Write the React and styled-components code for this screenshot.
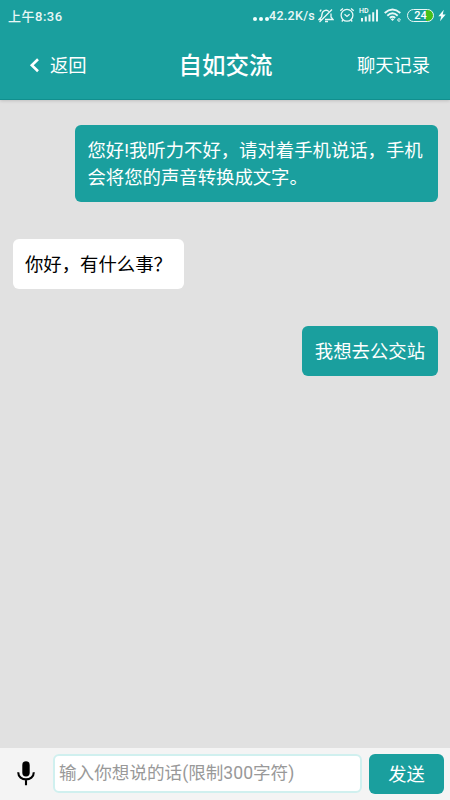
import React, { useState } from 'react'
import styled, { createGlobalStyle } from 'styled-components'

const messages = [
  { id: 1, mine: true, text: '您好!我听力不好，请对着手机说话，手机会将您的声音转换成文字。' },
  { id: 2, mine: false, text: '你好，有什么事？' },
  { id: 3, mine: true, text: '我想去公交站' },
]

const StatusIcons = () => {
  return (
    <StatusGroup>
      <Dots>
        <i />
        <i />
        <i />
      </Dots>
      <Speed>42.2K/s</Speed>
      {/* muted bell */}
      <svg width="16" height="15" viewBox="0 0 16 15" fill="none" stroke="#e9f7f6" strokeWidth="1.3">
        <path d="M3.500 9 1 11.500h2.500M11 3.600C8.500 1 4 2.500 4 6.500L3.500 9M13 5.500V9l2 2.500H7" />
        <path d="M7 13.500h3M1.500 14 14 1.500M1.800 3.500l1.500-1.800" />
      </svg>
      {/* alarm */}
      <svg className="alarm" width="16" height="16" viewBox="0 0 16 16" fill="none" stroke="#e9f7f6" strokeWidth="1.300">
        <circle cx="8" cy="8.300" r="5.900" />
        <path d="M5.500 7.300 8 9.400l2.600-2.100M1.300 3.700 4 1.500M14.700 3.700 12 1.500M4 13l-1.200 1.500M12 13l1.200 1.500" />
      </svg>
      <Signal>
        <span>HD</span>
        <svg width="18" height="13" viewBox="0 0 18 13" fill="#e9f7f6">
          <path d="M1 9h2v3.500H1zM4.800 7.500h2v5h-2zM8.500 5.500h2v7h-2zM12.200 3.200h2v9.300h-2zM16 .5h2v12h-2z" />
        </svg>
      </Signal>
      {/* wifi */}
      <svg className="wifi" width="19" height="16" viewBox="0 0 19 16" fill="none" stroke="#e9f7f6" strokeWidth="1.900">
        <path d="M.7 6Q8.500-.9 16.300 6M3.300 8.700Q8.500 4 13.700 8.700M5.800 11Q8.500 8.700 11.200 11" />
        <path d="M6.700 12.200 8.500 11.300 10.300 12.200 8.500 14Z" fill="#e9f7f6" stroke="none" />
        <path d="M13.700 13h2.600c0-2-2.600-2-2.600 0 0 1.600 1.700 1.700 2.500.9" strokeWidth=".8" />
      </svg>
      <Battery>24</Battery>
      <svg className="bolt" width="8" height="13" viewBox="0 0 8 13" fill="#f4fffe">
        <path d="M5.800.8.400 7.300h2.800L2 12.300l5.700-6.800H4.700Z" />
      </svg>
    </StatusGroup>
  )
}

const App = () => {
  const [text, setText] = useState('')

  return (
    <Page>
      <GlobalStyle />
      <Header>
        <StatusBar>
          <Clock>上午8:36</Clock>
          <StatusIcons />
        </StatusBar>
        <NavBar>
          <NavButton type="button">
            <svg width="11" height="16" viewBox="0 0 11 16" fill="none" stroke="#fff" strokeWidth="2.6">
              <path d="M10 1.200 3.800 7.200l6.200 6" />
            </svg>
            返回
          </NavButton>
          <Title>自如交流</Title>
          <NavButton type="button" $end>
            聊天记录
          </NavButton>
        </NavBar>
      </Header>

      {/* Messages */}
      <Messages>
        {messages.map((m) => {
          return (
            <Bubble key={m.id} $mine={m.mine}>
              {m.text}
            </Bubble>
          )
        })}
      </Messages>

      {/* Input bar */}
      <Composer onSubmit={(e) => e.preventDefault()}>
        <MicButton type="button" aria-label="mic">
          <svg width="18" height="25" viewBox="0 0 18 25">
            <rect x="5.300" y="0.300" width="7.400" height="15.200" rx="3.700" fill="#000" />
            <path d="M1.200 11.300c0 9.400 15.600 9.400 15.600 0M9 18.500v5.700" fill="none" stroke="#000" strokeWidth="2.1" />
          </svg>
        </MicButton>
        <TextInput
          placeholder="输入你想说的话(限制300字符)"
          value={text}
          onChange={(e) => setText(e.target.value)}
        />
        <SendButton type="submit">发送</SendButton>
      </Composer>
    </Page>
  )
}

const GlobalStyle = createGlobalStyle`
  * {
    box-sizing: border-box;
  }
  body {
    margin: 0;
    font-family: Roboto, 'Noto Sans CJK SC', sans-serif;
  }
  button,
  input {
    font-family: inherit;
  }
`

const Page = styled.div`
  display: flex;
  flex-direction: column;
  height: 100vh;
  background: #e1e1e1;
`

const Header = styled.header`
  position: relative;
  height: 100px;
  background: #1a9f9e;
  border-bottom: 1px solid #118f8e;
  box-shadow: 0 1px 3px rgba(0, 0, 0, 0.15);
  color: #fff;
`

const StatusBar = styled.div`
  display: flex;
  justify-content: space-between;
  align-items: center;
  height: 30px;
  padding: 0 4px 0 8px;
`

const Clock = styled.span`
  font-size: 13px;
  font-weight: 500;
  letter-spacing: 0.5px;
  color: #e9f7f6;
`

const StatusGroup = styled.div`
  display: flex;
  align-items: center;
  .alarm {
    margin-left: 5px;
  }
  .wifi {
    margin-left: 6px;
  }
  .bolt {
    margin-left: 4px;
  }
`

const Dots = styled.span`
  display: flex;
  gap: 2px;
  margin: 7px 0 0 0;
  i {
    width: 4px;
    height: 4px;
    border-radius: 50%;
    background: #f4fffe;
  }
`

const Speed = styled.span`
  width: 49px;
  font-size: 12.5px;
  font-weight: 500;
  letter-spacing: 0.3px;
  white-space: nowrap;
  color: #e9f7f6;
`

const Signal = styled.span`
  display: flex;
  position: relative;
  margin-left: 5px;
  span {
    position: absolute;
    top: -1px;
    left: -1px;
    font-size: 7px;
    font-weight: 500;
    line-height: 6px;
  }
`

const Battery = styled.span`
  width: 27px;
  height: 13px;
  margin-left: 4px;
  border: 1.5px solid #e9f7f6;
  border-radius: 7px;
  background: linear-gradient(to right, transparent 74%, #45c01a 74%);
  font-size: 11px;
  font-weight: 500;
  line-height: 11px;
  text-align: center;
`

const NavBar = styled.nav`
  display: grid;
  grid-template-columns: 1fr auto 1fr;
  align-items: center;
  height: 70px;
  padding: 2px 20px 0 28px;
`

const NavButton = styled.button`
  display: flex;
  align-items: center;
  justify-self: ${(props) => (props.$end ? 'end' : 'start')};
  gap: 11px;
  padding: 0;
  border: none;
  background: transparent;
  color: #fff;
  font-size: 18.3px;
  line-height: 28px;
`

const Title = styled.h1`
  margin: 0 7px 0 0;
  font-size: 23.5px;
  font-weight: 500;
  line-height: 34px;
`

const Messages = styled.main`
  flex: 1;
  display: flex;
  flex-direction: column;
  gap: 37px;
  padding: 25px 12.5px;
`

const Bubble = styled.div`
  align-self: ${(props) => (props.$mine ? 'flex-end' : 'flex-start')};
  max-width: 362.5px;
  padding: 12px 12.5px 11px;
  border-radius: 6px;
  background: ${(props) => (props.$mine ? '#1a9f9e' : '#fff')};
  color: ${(props) => (props.$mine ? '#fff' : '#000')};
  font-size: 18.36px;
  line-height: 27px;
`

const Composer = styled.form`
  display: flex;
  align-items: center;
  height: 52.5px;
  padding: 0 6px 0 0;
  background: #f4f4f4;
`

const MicButton = styled.button`
  display: flex;
  justify-content: center;
  width: 52px;
  margin-right: 1px;
  padding: 0;
  border: none;
  background: transparent;
`

const TextInput = styled.input`
  width: 309px;
  height: 39px;
  padding: 0 4px 2px;
  border: 2px solid #d0f0ef;
  border-radius: 6px;
  outline: none;
  background: #fff;
  font-size: 17.6px;
  &::placeholder {
    color: #999;
  }
`

const SendButton = styled.button`
  width: 75px;
  height: 40px;
  margin-left: auto;
  padding-bottom: 2px;
  border: none;
  border-radius: 6px;
  background: #1a9f9e;
  color: #fff;
  font-size: 18.3px;
`

export default App
